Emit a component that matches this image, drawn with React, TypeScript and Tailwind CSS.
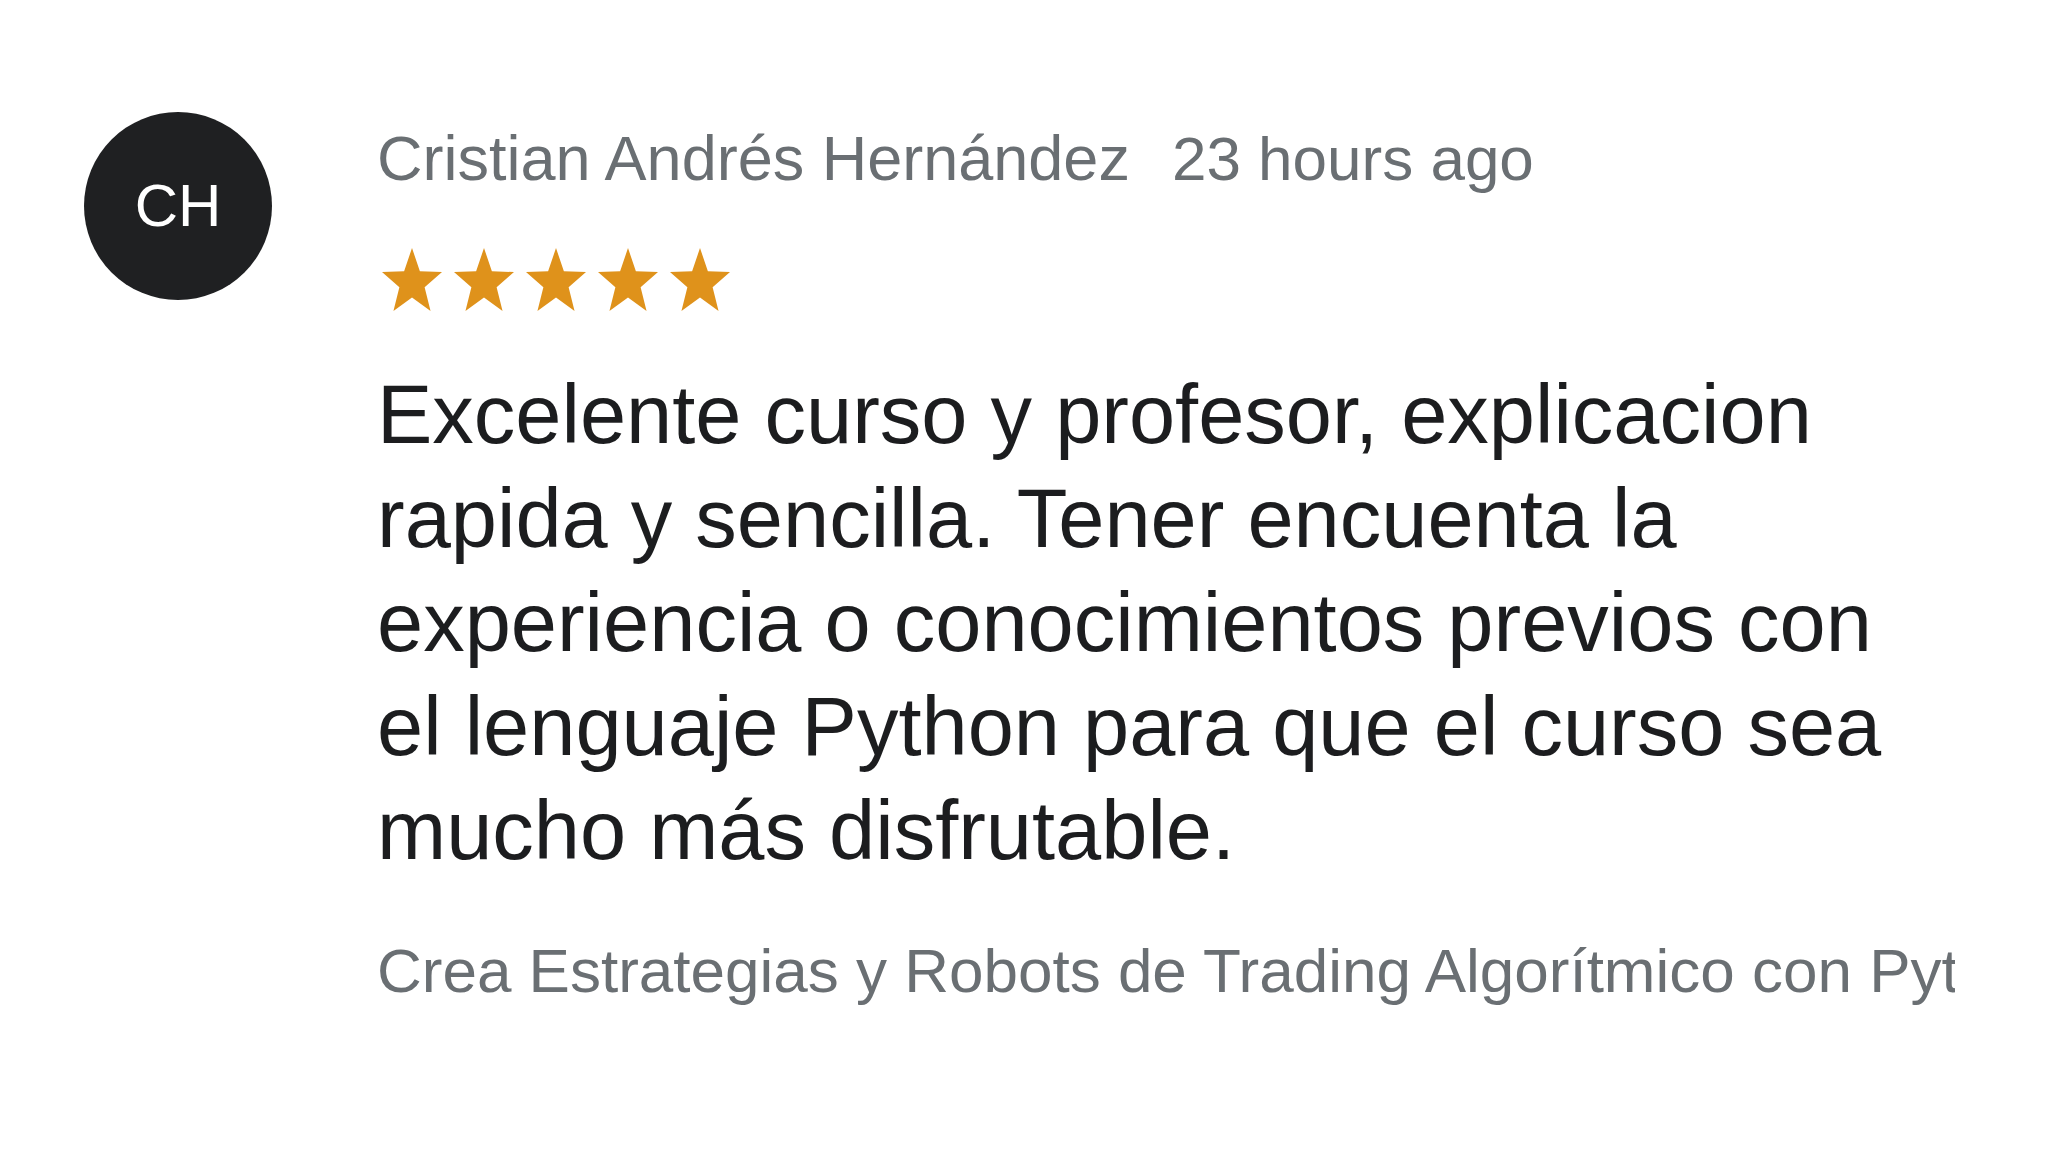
import { FC } from "react";

const Star: FC = () => (
    <svg viewBox="-0.951 -1 1.902 1.809" width={60} height={63} preserveAspectRatio="none">
        <polygon
            fill="#df921b"
            points="0,-1 0.25,-0.33 0.951,-0.309 0.4,0.13 0.588,0.809 0,0.42 -0.588,0.809 -0.4,0.13 -0.951,-0.309 -0.25,-0.33"
        />
    </svg>
);

const App: FC = () => {
    const review = {
        initials: "CH",
        name: "Cristian Andrés Hernández",
        time: "23 hours ago",
        rating: 5,
        text: "Excelente curso y profesor, explicacion rapida y sencilla. Tener encuenta la experiencia o conocimientos previos con el lenguaje Python para que el curso sea mucho más disfrutable.",
        course: "Crea Estrategias y Robots de Trading Algorítmico con Python",
    };

    return (
        <div className="min-h-screen bg-white flex items-start pt-[112px] pl-[84px] font-['Liberation_Sans',Arial,sans-serif]">
            <div className="w-[188px] h-[188px] shrink-0 rounded-full bg-[#1f2022] text-white text-[60px] flex items-center justify-center">
                {review.initials}
            </div>

            <div className="ml-[105px] pt-[9px] flex flex-col w-[1587px]">
                <div className="flex items-baseline gap-[42px] text-[63px] leading-[74px] text-[#6a6f73]">
                    <span>{review.name}</span>
                    <span className="text-[62px]">{review.time}</span>
                </div>

                <div className="mt-[52px] pl-[5px] flex gap-[12px]">
                    {Array.from({ length: review.rating }).map((_, key) => <Star key={key} />)}
                </div>

                <p className="mt-[52px] w-[1545px] text-[83px] leading-[104px] text-[#1c1d1f]">
                    {review.text}
                </p>

                <div className="mt-[51px] w-[1578px] text-[62px] leading-[74px] text-[#6a6f73] whitespace-nowrap overflow-hidden">
                    {review.course}
                </div>
            </div>
        </div>
    );
};

export default App;
